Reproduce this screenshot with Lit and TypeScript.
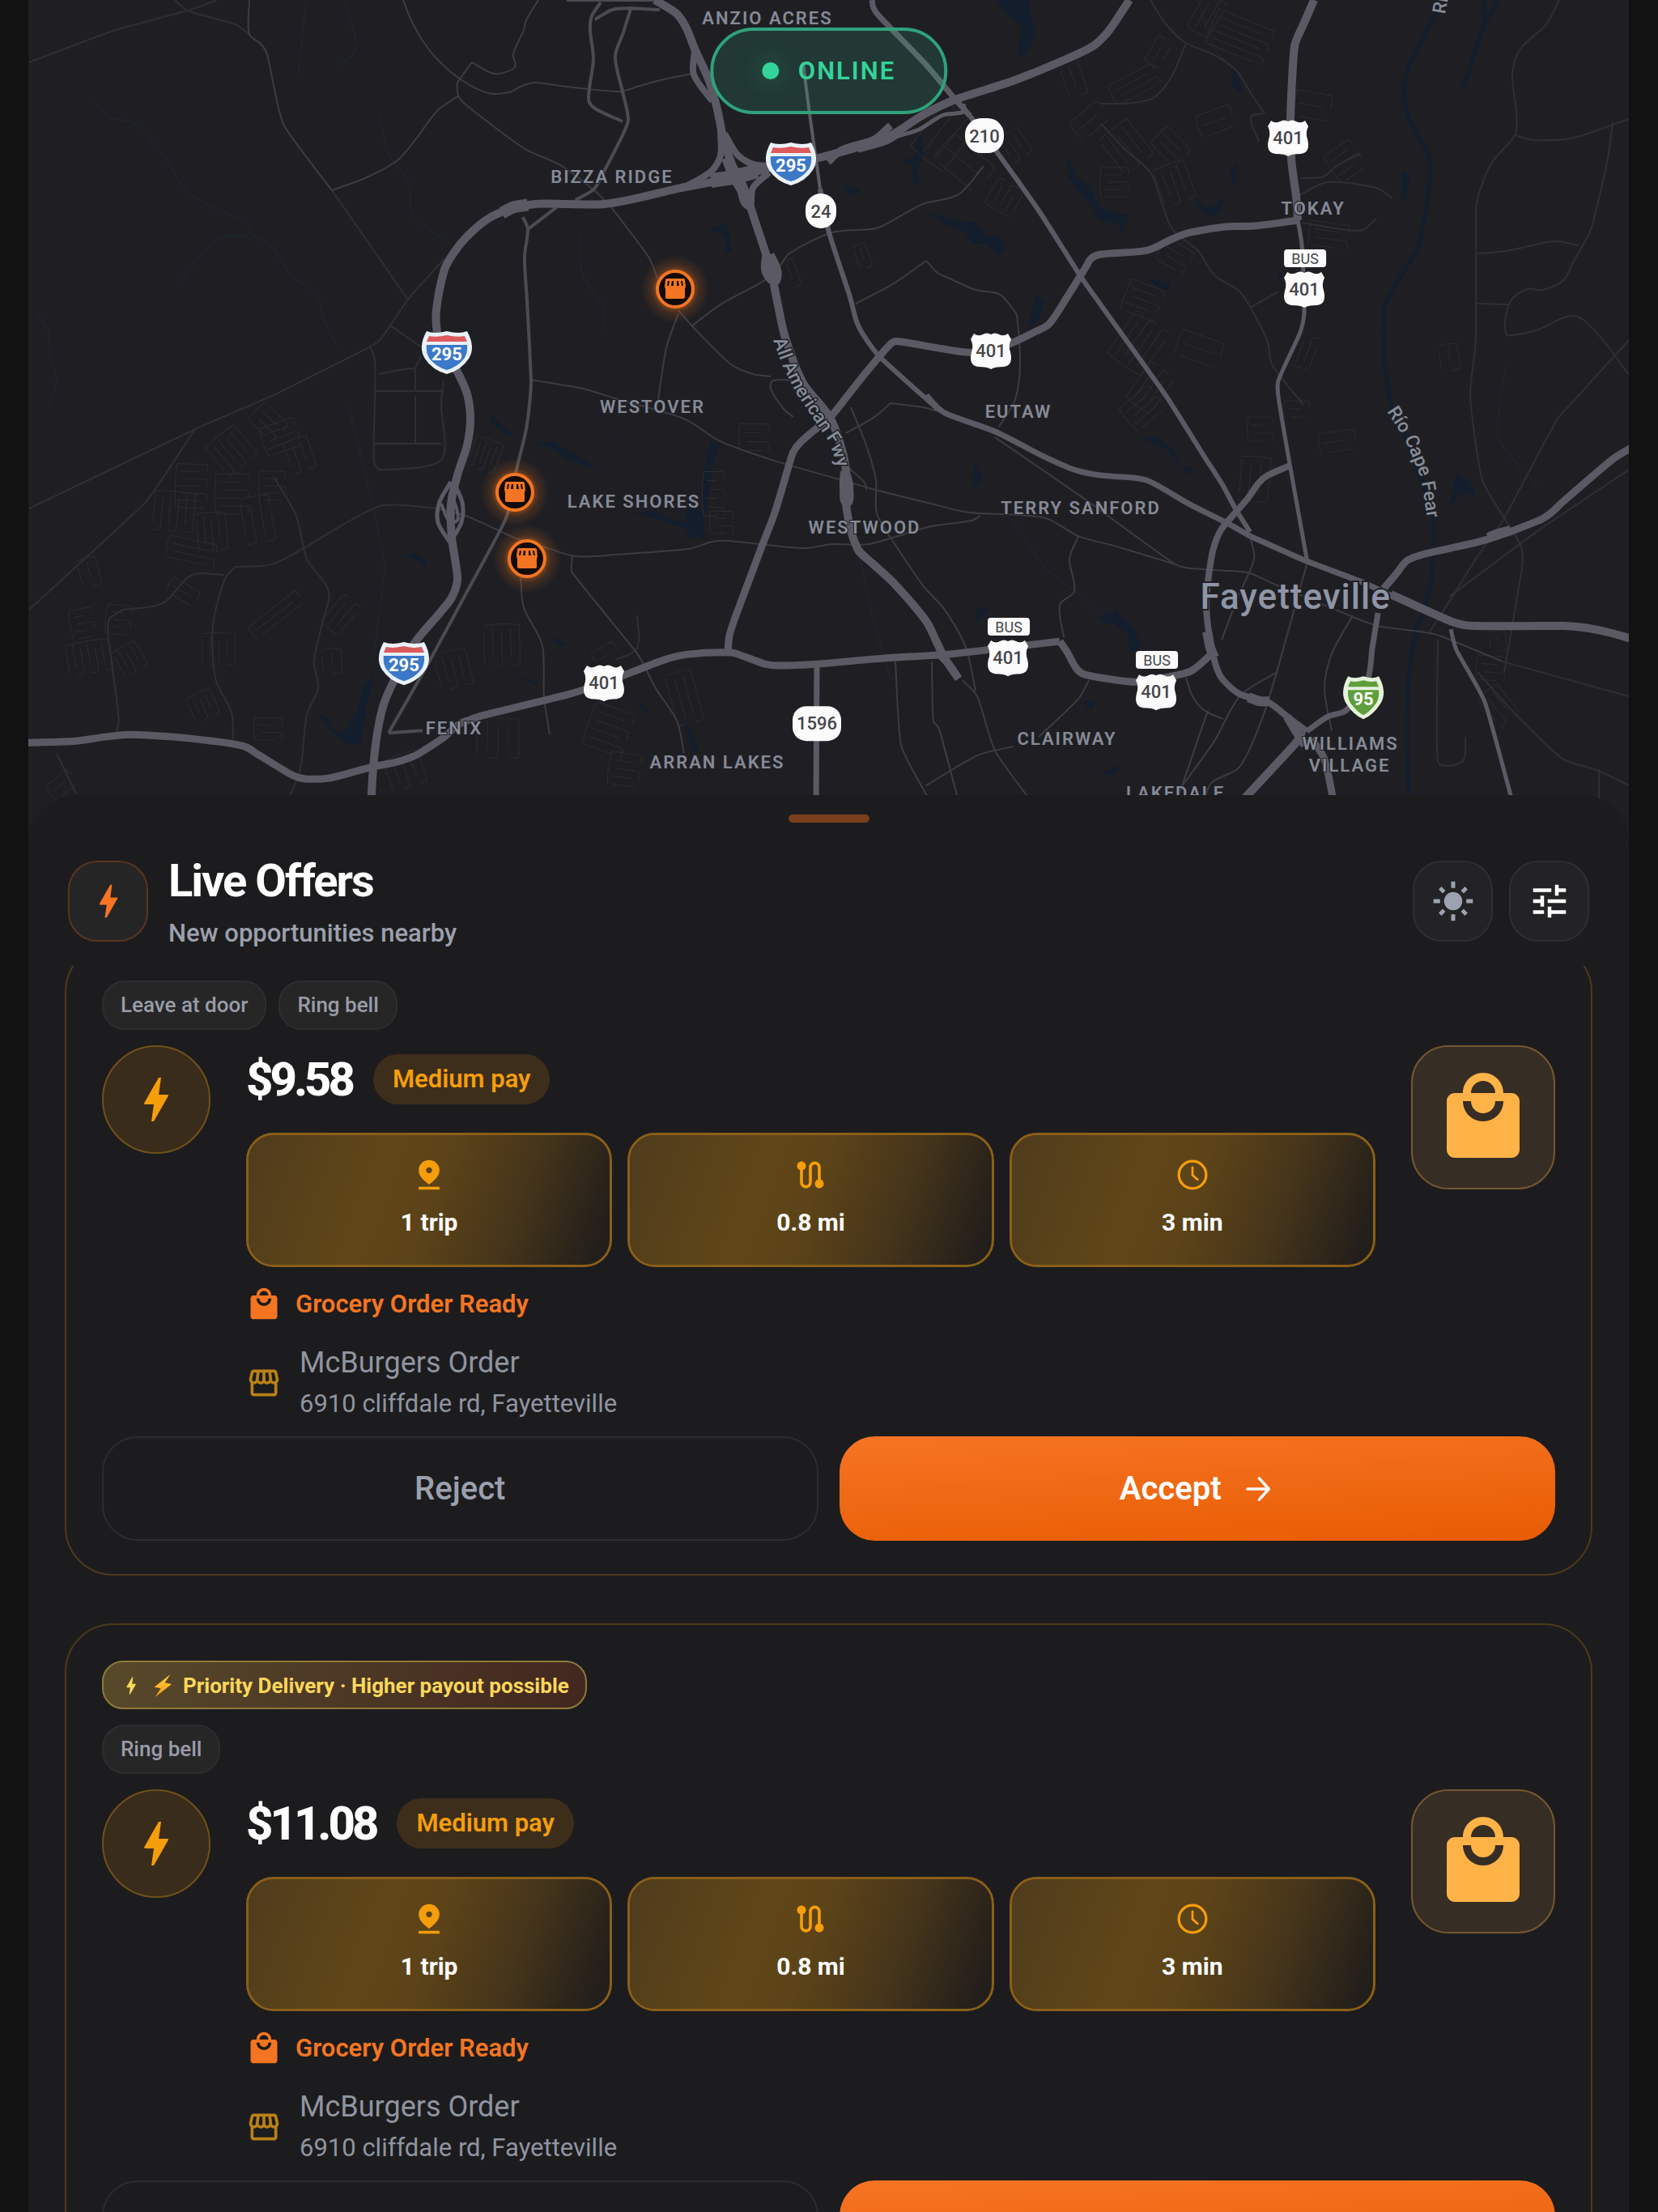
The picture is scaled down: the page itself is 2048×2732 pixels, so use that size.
import { LitElement, html, css, svg, nothing } from "lit";
import { customElement, property } from "lit/decorators.js";

type Point = [number, number];

const ICONS = {
  bolt: svg`<path d="M11 21h-1l1-7H7.5c-.6 0-.55-.35-.38-.66C8.5 10.9 10.4 7.5 13 3h1l-1 7h3.5c.5 0 .56.33.47.51C12.96 17.55 11 21 11 21z" />`,
  bag: svg`<path d="M19 6h-2c0-2.76-2.24-5-5-5S7 3.24 7 6H5c-1.1 0-1.99.9-1.99 2L3 20c0 1.1.9 2 2 2h14c1.1 0 2-.9 2-2V8c0-1.1-.9-2-2-2zm-7-3c1.66 0 3 1.34 3 3H9c0-1.66 1.34-3 3-3zm0 10c-2.76 0-5-2.24-5-5h2c0 1.66 1.34 3 3 3s3-1.34 3-3h2c0 2.76-2.24 5-5 5z" />`,
  store: svg`<path d="M21.9 8.89l-1.05-4.37c-.22-.9-1-1.52-1.91-1.52H5.05c-.9 0-1.69.63-1.9 1.52L2.1 8.89c-.24 1.02-.02 2.06.62 2.88.08.11.19.19.28.29V19c0 1.1.9 2 2 2h14c1.1 0 2-.9 2-2v-6.94c.09-.09.2-.18.28-.28.64-.82.87-1.87.62-2.89zm-2.99-3.9l1.05 4.37c.1.42.01.84-.25 1.17-.14.18-.44.47-.94.47-.61 0-1.14-.49-1.21-1.14L16.98 5l1.93-.01zM13 5h1.96l.54 4.52c.05.39-.07.78-.33 1.07-.22.26-.54.41-.95.41-.67 0-1.22-.59-1.22-1.31V5zM8.49 9.52L9.04 5H11v4.69c0 .72-.55 1.31-1.29 1.31-.34 0-.65-.15-.89-.41-.25-.29-.37-.68-.33-1.07zm-4.45-.16L5.05 5h1.97l-.58 4.86c-.08.65-.6 1.14-1.21 1.14-.49 0-.8-.29-.93-.47-.27-.32-.36-.75-.26-1.17zM5 19v-6.03c.08.01.15.03.23.03.87 0 1.66-.36 2.24-.95.6.6 1.4.95 2.31.95.87 0 1.65-.36 2.23-.93.59.57 1.39.93 2.29.93.84 0 1.64-.35 2.24-.95.58.59 1.37.95 2.24.95.08 0 .15-.02.23-.03V19H5z" />`,
  pin: svg`<path fill-rule="evenodd" d="M12 2a7 7 0 0 0-7 7c0 4 3.6 7 7 9.600C15.400 16 19 13 19 9a7 7 0 0 0-7-7zm0 8.900a2 2 0 1 1 0-4 2 2 0 0 1 0 4zM5 20v2h14v-2z" />`,
  route: svg`<path d="M19 15.180V7c0-2.210-1.790-4-4-4s-4 1.790-4 4v10c0 1.100-.9 2-2 2s-2-.9-2-2V8.820C8.160 8.400 9 7.300 9 6c0-1.660-1.340-3-3-3S3 4.340 3 6c0 1.300.840 2.400 2 2.820V17c0 2.210 1.790 4 4 4s4-1.790 4-4V7c0-1.100.9-2 2-2s2 .9 2 2v8.180c-1.160.41-2 1.510-2 2.820 0 1.660 1.340 3 3 3s3-1.340 3-3c0-1.300-.84-2.400-2-2.820z" />`,
  clock: svg`<g fill="none" stroke="currentColor" stroke-linecap="round"><circle cx="12" cy="12" r="9.200" stroke-width="1.800" /><path d="M12 7v5.200l3.400 3" stroke-width="1.500" /></g>`,
  arrow: svg`<path d="M4.500 12h14.500M12.800 4.500L19.600 12l-6.800 7.500" fill="none" stroke="currentColor" stroke-width="2" stroke-linecap="round" stroke-linejoin="round" />`,
  tune: svg`<path d="M3 17v2h6v-2H3zM3 5v2h10V5H3zm10 16v-2h8v-2h-8v-2h-2v6h2zM7 9v2H3v2h4v2h2V9H7zm14 4v-2H11v2h10zm-6-4h2V7h4V5h-4V3h-2v6z" />`,
  sun: svg`<circle cx="12" cy="12" r="5" /><path fill="none" stroke="currentColor" stroke-width="2.200" d="M12 1.200v3.600M12 19.200v3.600M1.200 12h3.600M19.200 12h3.600M4.800 4.800l2.200 2.200M17 17l2.200 2.200M4.800 19.200l2.200-2.200M17 7l2.200-2.200" />`,
  emojiBolt: svg`<defs><linearGradient id="zap" x1="0" y1="0" x2="0" y2="1"><stop offset="0" stop-color="#ffd23f" /><stop offset="1" stop-color="#fb9a13" /></linearGradient></defs><path fill="url(#zap)" d="M20 0L3 13.500l7 1.200L4 24 21.500 10.200l-7.200-1.400z" />`,
};

const icon = (name: keyof typeof ICONS, cls: string) =>
  html`<svg class="icon ${cls}" viewBox="0 0 24 24" fill="currentColor" aria-hidden="true">${ICONS[name]}</svg>`;

/* ---------- map data, in map units ---------- */

const MAJOR: { w: number; d: string }[] = [
  { w: 10, d: "459,1040 459,982 464,920 473,873 487,840 513,793 545,755 558,738 565,717 562,690 558,663 557,623 565,587 577,550 581,520 578,490 567,463 545,425 540,410 539,383 549,333 560,313 576,293 600,272 625,260 661,252 700,252 747,252 790,244 836,233 903,220 948,208 1019,193 1095,170 1140,142 1180,123 1251,100 1310,76 1350,57 1368,40 1382,20 1395,0" },
  { w: 10, d: "809,0 836,17 848,35 858,60 876,100 886,135 894,173 905,205 917,227 934,277 952,333 960,372 970,417 992,473 1026,517 1044,573 1046,630 1059,677 1078,696 1104,720 1144,767 1158,795 1167,813 1184,838" },
  { w: 8, d: "858,62 857,92 880,125" },
  { w: 8, d: "890,160 890,192 878,212 840,234" },
  { w: 8, d: "895,165 912,192 935,204 985,203" },
  { w: 18, d: "878,223 905,219 935,211" },
  { w: 12, d: "897,195 905,215 918,238" },
  { w: 8, d: "912,225 924,255 930,232 950,213" },
  { w: 5, d: "1060,186 1095,176 1110,168 1135,160 1165,142 1190,138 1190,128" },
  { w: 9, d: "1023,200 1040,185 1080,172 1100,155" },
  { w: 9, d: "946,312 945,335 957,348 961,335 952,314" },
  { w: 8, d: "1042,582 1041,600 1046,622 1050,600 1045,580" },
  { w: 9, d: "1052,660 1060,680 1070,690" },
  { w: 9, d: "1162,810 1175,824 1184,838" },
  { w: 5, d: "557,595 543,620 541,645 556,670" },
  { w: 5, d: "560,595 571,620 570,645 556,670" },
  { w: 4, d: "545,622 556,645 566,640 558,610" },
  { w: 15, d: "620,263 634,256 652,253" },
  { w: 4, d: "992,77 999,133 1013,233" },
  { w: 6, d: "1013,233 1024,287 1050,367 1058,397 1066,413 1086,440 1158,505" },
  { w: 7, d: "1144,488 1160,505 1171,512 1229,533 1290,564 1327,580 1360,587 1400,590 1421,595 1470,623 1514,645 1544,662" },
  { w: 7, d: "1544,662 1614,693 1680,718 1724,738" },
  { w: 10, d: "1718,734 1794,768 1821,773 1930,773 1974,778 2020,790" },
  { w: 7, d: "1077,0 1079,10 1086,20 1144,80 1175,117 1198,143" },
  { w: 6, d: "1198,143 1233,190 1283,260 1334,340 1360,377 1441,490 1487,563 1509,597 1527,630 1544,657" },
  { w: 10, d: "1623,0 1610,30 1599,57 1594,143 1595,197 1601,243 1603,272" },
  { w: 9, d: "1603,272 1549,279 1514,280 1470,287 1450,294 1417,309 1360,314 1348,319 1341,330 1318,367 1296,400 1280,409 1251,423 1225,433 1193,435 1113,422 1104,422 1095,430 1064,467 1042,495 1024,517 1005,532 988,547 980,558 975,573 957,633 939,680 908,763 901,785 899,805" },
  { w: 5, d: "1603,272 1608,303 1611,383 1606,410 1579,470 1579,490 1593,573 1614,690" },
  { w: 8, d: "1593,575 1566,587 1555,596 1540,617 1509,653 1501,670 1496,690 1490,740 1492,773 1498,807 1504,828 1511,840 1531,857 1566,867 1590,885 1614,903" },
  { w: 12, d: "1491,780 1495,800 1500,812" },
  { w: 12, d: "1542,861 1556,866 1568,866" },
  { w: 10, d: "1524,1000 1601,917 1608,904" },
  { w: 11, d: "1590,885 1602,905 1612,920" },
  { w: 7, d: "1614,903 1640,885 1663,877 1689,840 1695,800 1702,757" },
  { w: 9, d: "1620,912 1636,938 1649,1000" },
  { w: 9, d: "1709,727 1725,708 1737,693 1750,687 1764,683 1834,667 1900,643 1915,634 1930,620 1992,567 2020,550" },
  { w: 12, d: "1838,664 1850,659 1866,655" },
  { w: 5, d: "1792,777 1795,790 1799,803 1834,867 1868,990" },
  { w: 9, d: "35,917 94,915 130,910 161,907 214,910 270,916 295,920 305,923 321,933 357,955 368,960 379,962 406,961 460,947 490,941 513,933 525,926 549,910 566,895 580,889 598,883 700,858 747,843 820,815 850,808 903,806 920,811 945,820 961,822 1010,820 1090,813 1171,808 1240,800 1309,792" },
  { w: 9, d: "1309,792 1318,805 1330,826 1340,833 1380,840 1404,842 1457,833 1474,827 1496,808" },
  { w: 7, d: "1009,823 1008,1000" },
];

const MEDIUM: string[] = [
  "646,268 652,283 648,317 651,370 656,467 655,490 650,530 638,580 625,640 580,725 527,823 480,905",
  "480,905 522,902",
  "652,283 690,254",
  "700,0 815,0",
  "742,3 731,20 729,37 733,73 727,123 735,134 769,150",
  "780,8 770,40 760,70 769,113 776,147 770,165 747,210 734,233 711,247",
  "735,24 760,11 815,12",
];

const MINOR: string[] = [
  "308,0 308,42 322,54 330,67 350,153 410,235",
  "498,0 508,25 522,50 540,73 569,98 603,115 629,114 645,106 661,102 700,107 765,113 790,106 820,98 855,91",
  "665,0 650,25 647,37 634,67 636,83 616,91 604,89 583,77",
  "583,77 570,95 565,103 567,120 580,133 647,183 680,198 694,205 734,235 756,257",
  "567,118 540,137 515,170 491,198 451,220 410,235",
  "756,257 801,317 812,343",
  "838,383 859,407 903,450 930,462 952,465",
  "838,387 823,430 812,500",
  "854,403 890,376 943,347 962,330 975,313 1028,287 1082,282 1110,268 1140,252 1184,240 1215,205",
  "1057,375 1104,350 1144,322",
  "1144,322 1158,337 1171,343 1205,358 1234,363 1250,380 1256,390 1260,450 1254,493 1234,527",
  "656,469 680,473 720,480 760,492 845,517 890,545 960,570 1037,592 1082,605 1150,622 1198,633 1240,635",
  "540,628 576,637 638,665 680,678 711,687 760,685 850,678 880,669 900,668 992,677 1028,672 1073,672 1150,650 1200,643 1211,637",
  "1229,540 1341,617 1452,697 1483,703 1540,707 1571,720 1650,753 1702,773 1772,783 1856,817",
  "1240,635 1292,640 1332,662 1380,675 1452,697",
  "1332,662 1321,690 1327,730 1309,747 1314,787",
  "1051,503 1070,550 1082,593 1084,637 1140,723 1167,753 1193,800 1205,853",
  "1189,840 1207,860 1229,927 1274,990",
  "1251,922 1207,933 1144,970",
  "1106,817 1113,920 1149,990",
  "1151,817 1153,890 1160,900 1184,990",
  "1345,840 1332,863 1283,910",
  "1465,837 1472,858 1487,877 1511,888",
  "1492,877 1456,982",
  "1577,830 1531,860 1500,915 1457,975",
  "1614,697 1579,823 1558,890 1531,947 1496,967 1487,990",
  "1544,663 1549,690 1530,735 1509,790",
  "1671,760 1645,807 1636,850 1645,903",
  "643,713 647,750 670,797 672,860 679,907",
  "707,687 707,707 787,807 810,850 836,890 845,930",
  "984,470 955,470 952,480 968,505 980,515",
  "1045,535 1080,515 1100,498",
  "1045,575 1068,596 1070,605",
  "1100,498 1140,503 1171,512",
];

const FAINT: string[] = [
  "410,235 504,370",
  "549,320 535,335 504,370 482,402 467,422 440,437 388,463 340,487 241,530 36,628",
  "241,530 180,620 36,753",
  "482,402 520,428",
  "36,77 140,38 232,13 268,0",
  "216,0 232,13 290,30 308,42",
  "290,700 335,697 375,677 420,650 469,625 500,624 540,628",
  "290,700 277,717 263,773 266,837 286,880 288,913",
  "339,590 366,637 379,690 406,730 398,770 388,817 393,850 379,883 371,950 355,990",
  "152,753 201,745 237,710 277,710",
  "152,753 134,767 138,817 147,890 143,905",
  "1926,0 1910,30 1878,60 1868,90 1873,140 1871,167 1843,200 1828,235 1823,260 1823,417 1816,490 1830,590 1856,637 1880,680 1875,730 1858,830",
  "1871,167 1895,173 1944,170 2012,147",
  "1992,150 1985,200 1965,283 1945,320 1930,347 1905,358 1886,357 1865,373 1860,412 1875,413 1900,407 1944,390 1974,413 2012,463",
  "1825,313 1860,310 1920,298 1950,303",
  "1823,375 1865,376",
  "2012,420 1939,500 1922,520 1856,643 1825,687 1790,743 1764,783",
  "2012,580 1900,655 1790,737",
  "1421,0 1440,30 1465,53 1500,68 1527,87 1545,115 1562,140",
  "1465,53 1448,93 1426,120 1400,127 1360,128",
  "1360,153 1390,185 1421,213 1435,250 1448,283 1480,310 1500,340 1531,360 1553,395 1566,423 1571,450 1610,500",
  "1544,380 1579,360",
  "1856,817 2012,860",
  "1825,830 1870,880 1930,937 1970,950 2012,970",
  "1975,950 1975,1000",
  "1776,790 1776,940 1806,940 1810,910",
  "457,427 463,445 463,500 462,570 470,580 545,568 545,500 548,470",
  "468,462 505,455 512,455 520,440",
  "463,548 545,548",
  "465,483 548,483",
  "513,490 513,547",
  "513,455 513,483",
  "94,980 70,930",
  "787,760 787,800 760,815",
  "1560,140 1545,145 1555,175",
  "1607,220 1635,218 1650,205 1680,190",
  "1601,243 1640,225 1700,232 1720,245",
  "1608,275 1680,285 1700,270",
];

const STREAMS: string[] = [
  "115,125 135,145 165,152 200,190 230,235 260,255 305,275 312,290 335,303 360,340 392,365 400,395 418,430",
  "305,290 270,295 240,325 218,355",
  "45,385 60,410 62,440 70,470 60,500",
  "468,140 480,190 505,225 510,265 550,298",
  "378,0 372,60 368,95",
  "425,0 440,60 418,82",
  "430,500 455,600 475,700 460,820",
  "715,290 720,340 745,380 745,410",
  "1060,680 1080,770 1100,840",
  "1250,640 1290,700 1340,740 1370,770",
  "1480,0 1500,60 1530,90",
  "1860,450 1850,540 1900,600",
];

const WATER: string[] = [
  "1230,0 1270,0 1275,25 1280,40 1268,66 1256,70 1262,35 1240,12",
  "1148,262 1175,270 1205,275 1220,290 1236,292 1242,308 1232,316 1218,302 1202,302 1190,285 1165,276",
  "1318,195 1330,218 1345,230 1362,262 1380,265 1380,275 1358,272 1340,245 1320,220",
  "1136,165 1142,190 1132,210 1136,228 1126,225 1128,205 1115,200 1130,192",
  "1280,365 1290,372 1284,395 1270,405 1275,385",
  "893,275 900,283 904,310 897,312 894,290 875,282 888,280",
  "1040,230 1064,234 1056,243 1044,236",
  "1360,257 1385,264 1394,266 1386,288 1380,276 1360,274",
  "1474,243 1490,258 1500,255 1514,242 1508,258 1496,270 1484,262",
  "1522,82 1532,100 1534,116 1522,106",
  "1530,200 1526,218 1530,230 1522,226 1520,210",
  "1418,342 1445,350 1445,360 1428,354",
  "1733,212 1742,215 1738,240 1734,250 1730,225",
  "464,830 456,860 450,890 446,918 430,920 412,905 393,882 402,884 415,903 425,905 440,880 448,850",
  "783,633 810,630 825,640 845,645 852,625 868,632 870,665 856,665 845,652 800,638",
  "872,570 878,545 890,548 880,575 874,625 868,640 868,600",
  "680,545 700,555 725,570 738,580 722,575 700,568 690,560",
  "745,515 762,535 767,545 758,530",
  "605,512 632,535 630,540 610,525",
  "660,547 685,545 700,560 685,555",
  "500,688 512,682 526,692 527,702 515,692",
  "1410,541 1430,540 1450,555 1460,575 1474,578 1470,588 1455,570 1440,555",
  "1800,583 1820,600 1822,612 1805,610 1790,625 1795,600",
  "1203,570 1214,590 1207,600 1200,600",
  "1360,765 1380,756 1400,775 1410,800 1396,805 1392,782 1375,770",
  "1207,750 1222,752 1205,770",
  "680,785 690,790 702,796 690,797",
  "843,885 856,905 865,930 855,928 850,905",
  "782,862 805,880 800,882",
  "1358,762 1380,752 1380,766 1365,770",
  "1337,866 1352,866 1350,875 1342,873",
  "1355,955 1385,945 1375,958",
  "1580,336 1586,338 1580,346",
  "640,835 664,843 660,846",
];

/* Residential streets: short parallel runs with one collector. */
interface Block { x: number; y: number; n: number; gap: number; len: number; rot: number }
const BLOCKS: Block[] = [
  { x: 345, y: 540, n: 5, gap: 9, len: 40, rot: -20 },
  { x: 285, y: 555, n: 6, gap: 9, len: 42, rot: 50 },
  { x: 235, y: 600, n: 7, gap: 9, len: 34, rot: 2 },
  { x: 285, y: 610, n: 6, gap: 10, len: 36, rot: 0 },
  { x: 335, y: 600, n: 5, gap: 9, len: 28, rot: 0 },
  { x: 215, y: 630, n: 6, gap: 10, len: 44, rot: 95 },
  { x: 262, y: 655, n: 5, gap: 9, len: 42, rot: 85 },
  { x: 318, y: 640, n: 4, gap: 12, len: 52, rot: 80 },
  { x: 330, y: 520, n: 4, gap: 10, len: 36, rot: 45 },
  { x: 370, y: 560, n: 4, gap: 10, len: 36, rot: 70 },
  { x: 235, y: 680, n: 4, gap: 9, len: 56, rot: 12 },
  { x: 100, y: 770, n: 5, gap: 9, len: 24, rot: -10 },
  { x: 145, y: 765, n: 5, gap: 9, len: 26, rot: 5 },
  { x: 110, y: 810, n: 7, gap: 9, len: 34, rot: 80 },
  { x: 160, y: 812, n: 5, gap: 8, len: 30, rot: 60 },
  { x: 270, y: 800, n: 5, gap: 10, len: 34, rot: 90 },
  { x: 225, y: 730, n: 3, gap: 10, len: 34, rot: 30 },
  { x: 340, y: 760, n: 3, gap: 9, len: 70, rot: -38 },
  { x: 420, y: 760, n: 4, gap: 9, len: 40, rot: -50 },
  { x: 410, y: 815, n: 3, gap: 12, len: 26, rot: 85 },
  { x: 250, y: 870, n: 5, gap: 8, len: 28, rot: 65 },
  { x: 330, y: 900, n: 4, gap: 9, len: 30, rot: 0 },
  { x: 110, y: 705, n: 3, gap: 12, len: 30, rot: 75 },
  { x: 600, y: 560, n: 6, gap: 7, len: 34, rot: 110 },
  { x: 560, y: 825, n: 5, gap: 10, len: 40, rot: 75 },
  { x: 620, y: 795, n: 5, gap: 11, len: 46, rot: 88 },
  { x: 500, y: 950, n: 5, gap: 11, len: 36, rot: 70 },
  { x: 615, y: 910, n: 5, gap: 13, len: 44, rot: 90 },
  { x: 880, y: 610, n: 6, gap: 11, len: 22, rot: 0 },
  { x: 890, y: 645, n: 4, gap: 9, len: 24, rot: 0 },
  { x: 930, y: 540, n: 4, gap: 11, len: 32, rot: 0 },
  { x: 750, y: 900, n: 6, gap: 11, len: 46, rot: 20 },
  { x: 770, y: 950, n: 5, gap: 10, len: 34, rot: 8 },
  { x: 845, y: 860, n: 4, gap: 11, len: 60, rot: 75 },
  { x: 745, y: 805, n: 2, gap: 12, len: 26, rot: -30 },
  { x: 1165, y: 170, n: 4, gap: 17, len: 66, rot: -52 },
  { x: 1190, y: 200, n: 3, gap: 20, len: 62, rot: 40 },
  { x: 1250, y: 180, n: 5, gap: 9, len: 30, rot: 55 },
  { x: 1240, y: 245, n: 5, gap: 9, len: 32, rot: -60 },
  { x: 1325, y: 95, n: 3, gap: 12, len: 40, rot: 70 },
  { x: 1345, y: 150, n: 3, gap: 14, len: 40, rot: -40 },
  { x: 1065, y: 315, n: 3, gap: 8, len: 26, rot: 70 },
  { x: 980, y: 335, n: 2, gap: 9, len: 30, rot: 70 },
  { x: 1530, y: 45, n: 6, gap: 9, len: 70, rot: 22 },
  { x: 1490, y: 20, n: 4, gap: 10, len: 44, rot: -60 },
  { x: 1400, y: 105, n: 4, gap: 9, len: 56, rot: -28 },
  { x: 1430, y: 65, n: 3, gap: 10, len: 30, rot: -60 },
  { x: 1390, y: 180, n: 5, gap: 11, len: 50, rot: 52 },
  { x: 1375, y: 225, n: 5, gap: 9, len: 30, rot: 0 },
  { x: 1445, y: 180, n: 4, gap: 10, len: 38, rot: 45 },
  { x: 1450, y: 225, n: 5, gap: 10, len: 44, rot: 70 },
  { x: 1500, y: 150, n: 3, gap: 14, len: 40, rot: -20 },
  { x: 1450, y: 315, n: 4, gap: 10, len: 34, rot: 30 },
  { x: 1410, y: 370, n: 5, gap: 10, len: 40, rot: 20 },
  { x: 1405, y: 425, n: 6, gap: 10, len: 60, rot: -55 },
  { x: 1480, y: 430, n: 3, gap: 16, len: 50, rot: 20 },
  { x: 1420, y: 480, n: 5, gap: 9, len: 50, rot: -55 },
  { x: 1610, y: 435, n: 4, gap: 9, len: 36, rot: -70 },
  { x: 1660, y: 200, n: 5, gap: 10, len: 34, rot: -35 },
  { x: 1640, y: 290, n: 4, gap: 10, len: 44, rot: 8 },
  { x: 1620, y: 130, n: 3, gap: 16, len: 40, rot: 10 },
  { x: 1410, y: 505, n: 5, gap: 9, len: 42, rot: -40 },
  { x: 1555, y: 530, n: 4, gap: 10, len: 26, rot: 0 },
  { x: 1650, y: 545, n: 3, gap: 12, len: 40, rot: -8 },
  { x: 1550, y: 590, n: 4, gap: 12, len: 50, rot: 95 },
  { x: 1600, y: 505, n: 3, gap: 10, len: 26, rot: 0 },
  { x: 1840, y: 825, n: 4, gap: 10, len: 30, rot: 5 },
  { x: 1850, y: 870, n: 4, gap: 10, len: 40, rot: 50 },
  { x: 1850, y: 790, n: 3, gap: 10, len: 20, rot: 85 },
  { x: 1790, y: 440, n: 3, gap: 12, len: 28, rot: 80 },
  { x: 75, y: 970, n: 3, gap: 11, len: 30, rot: -40 },
];

const blockPath = (b: Block) => {
  let d = "";
  const half = ((b.n - 1) * b.gap) / 2;
  for (let i = 0; i < b.n; i++) {
    const y = i * b.gap - half;
    const left = -b.len / 2 + ((i * 7) % 5) * 2;
    const right = b.len / 2 - ((i * 3) % 6) * 2;
    d += `M${left} ${y}H${right}`;
    if (i % 2 === 0 && i < b.n - 1) d += `q4 0 4 4v${b.gap - 4}`;
  }
  return `${d}M${-b.len / 2} ${-half}q-3 ${half} 0 ${half * 2}`;
};

const toPoints = (s: string): Point[] => s.split(" ").map((p) => p.split(",").map(Number) as Point);

/* Smooth curve through every point, with handles scaled to each segment. */
const curve = (s: string) => {
  const p = toPoints(s);
  const dir = (i: number): Point => {
    const a = p[Math.max(i - 1, 0)];
    const b = p[Math.min(i + 1, p.length - 1)];
    const n = Math.hypot(b[0] - a[0], b[1] - a[1]) || 1;
    return [(b[0] - a[0]) / n, (b[1] - a[1]) / n];
  };
  let d = `M${p[0][0]} ${p[0][1]}`;
  for (let i = 0; i < p.length - 1; i++) {
    const [a, b, u, v] = [p[i], p[i + 1], dir(i), dir(i + 1)];
    const h = Math.min(Math.hypot(b[0] - a[0], b[1] - a[1]) * 0.3, 16);
    d += `C${a[0] + u[0] * h} ${a[1] + u[1] * h} ${b[0] - v[0] * h} ${b[1] - v[1] * h} ${b[0]} ${b[1]}`;
  }
  return d;
};

const PLACES: { t: string; x: number; y: number }[] = [
  { t: "ANZIO ACRES", x: 948, y: 30 },
  { t: "BIZZA RIDGE", x: 756, y: 226 },
  { t: "TOKAY", x: 1622, y: 265 },
  { t: "WESTOVER", x: 806, y: 510 },
  { t: "EUTAW", x: 1258, y: 516 },
  { t: "LAKE SHORES", x: 783, y: 627 },
  { t: "WESTWOOD", x: 1068, y: 659 },
  { t: "TERRY SANFORD", x: 1335, y: 635 },
  { t: "FENIX", x: 561, y: 907 },
  { t: "ARRAN LAKES", x: 886, y: 949 },
  { t: "CLAIRWAY", x: 1318, y: 920 },
  { t: "WILLIAMS", x: 1668, y: 926 },
  { t: "VILLAGE", x: 1667, y: 953 },
  { t: "LAKEDALE", x: 1452, y: 987 },
];

const US_ROUTES: Point[] = [[1591, 170], [1611, 357], [1224, 433], [746, 843], [1245, 812], [1428, 854]];
const BUSINESS: Point[] = [[1612, 319], [1246, 774], [1429, 815]];
const INTERSTATES: Point[] = [[552, 435], [977, 202], [499, 819]];
const PICKUPS: Point[] = [[834, 357], [636, 608], [651, 690]];

@customElement("city-map")
export class CityMap extends LitElement {
  static styles = css`
    :host { display: block; overflow: hidden; background: #1f1f23; }
    .canvas { display: block; width: 100%; height: 100%; }
    text { font-family: Roboto, "Liberation Sans", sans-serif; }
    .road, .medium, .minor, .faint, .stream, .river, .streets { fill: none; stroke-linejoin: round; }
    .road { stroke: #5b5a64; }
    .medium { stroke: #4c4b52; stroke-width: 4; }
    .minor { stroke: #3d3c41; stroke-width: 2; }
    .faint { stroke: #303034; stroke-width: 2; }
    .streets { stroke: #2d2d31; stroke-width: 1; }
    .stream { stroke: #1d252b; stroke-width: 2; }
    .river { stroke: #131d2b; stroke-width: 5; }
    .water { fill: #131d2b; }
    .place { fill: #868a97; font-size: 22px; font-weight: 600; letter-spacing: 2px; text-anchor: middle; stroke: #1f1f23; stroke-width: 2; paint-order: stroke; }
    .city { fill: #8f95a6; font-size: 44px; font-weight: 500; letter-spacing: 1px; text-anchor: middle; stroke: #1f1f23; stroke-width: 4; paint-order: stroke; }
    .way { fill: #868c9a; font-size: 23px; font-weight: 500; stroke: #1f1f23; stroke-width: 3; paint-order: stroke; }
    .num { font-size: 22px; font-weight: 500; text-anchor: middle; fill: #45464a; }
    .bus { font-size: 18px; font-weight: 400; }
    .light { fill: #ffffff; font-weight: 700; }
    .plate { fill: #fbfbfb; }
  `;

  render() {
    return html`
      <svg class="canvas" viewBox="35 0 1977 1038" preserveAspectRatio="xMidYMin slice" role="img" aria-label="Map of Fayetteville">
        <defs>
          <radialGradient id="glow">
            <stop offset="0.5" stop-color="#f97316" stop-opacity="0.5" />
            <stop offset="0.7" stop-color="#f97316" stop-opacity="0.16" />
            <stop offset="1" stop-color="#f97316" stop-opacity="0" />
          </radialGradient>
          <path id="fwy" d="M955 420L966 450L982 483L1004 516L1024 545L1034 575L1038 600" />
          <path id="cape" d="M1713 508L1736 544L1755 590L1763 640L1764 660" />
        </defs>
        ${STREAMS.map((p) => svg`<path class="stream" d=${curve(p)} />`)}
        ${WATER.map((p) => svg`<polygon class="water" points=${p} />`)}
        <path class="river" d="M1778 10L1742 77Q1726 115 1742 150L1766 193Q1770 230 1751 307L1711 373Q1703 420 1718 500L1740 550L1770 633Q1776 720 1751 773Q1730 850 1742 1000" />
        <path class="river" d="M1851 0L1834 27L1808 107M1832 0L1834 27" />
        ${BLOCKS.map((b) => svg`<path class="streets" transform="translate(${b.x} ${b.y}) rotate(${b.rot})" d=${blockPath(b)} />`)}
        ${FAINT.map((p) => svg`<path class="faint" d=${curve(p)} />`)}
        ${MINOR.map((p) => svg`<path class="minor" d=${curve(p)} />`)}
        ${MEDIUM.map((p) => svg`<path class="medium" d=${curve(p)} />`)}
        ${MAJOR.map((r) => svg`<path class="road" stroke-width=${r.w} d=${curve(r.d)} />`)}
        ${PLACES.map((p) => svg`<text class="place" x=${p.x} y=${p.y}>${p.t}</text>`)}
        <text class="city" x="1600" y="752">Fayetteville</text>
        <text class="way"><textPath href="#fwy">All American Fwy</textPath></text>
        <text class="way"><textPath href="#cape">Río Cape Fear</textPath></text>
        <text class="way" transform="translate(1785 18) rotate(-80)">Río</text>
        ${INTERSTATES.map(([x, y]) => this.interstate(x, y, "295", "#3b78c8", "#dd5a5c", "#e9f1fb", 30))}
        ${this.interstate(1684, 861, "95", "#5f9e3c", "#5f9e3c", "#e4f1db", 24)}
        <rect class="plate" x="1192" y="146" width="48" height="43" rx="20" />
        <text class="num" x="1216" y="176">210</text>
        <rect class="plate" x="995" y="239" width="38" height="43" rx="19" />
        <text class="num" x="1014" y="269">24</text>
        <rect class="plate" x="979" y="872" width="60" height="43" rx="17" />
        <text class="num" x="1009" y="901">1596</text>
        ${US_ROUTES.map(([x, y]) => svg`
          <g transform="translate(${x} ${y})">
            <path class="plate" d="M-21 -21Q-16 -17 -10 -20Q-5 -23 0 -20Q5 -23 10 -20Q16 -17 21 -21L25 -14Q21 -6 24 2Q28 18 16 20Q4 20 0 23Q-4 20 -16 20Q-28 18 -24 2Q-21 -6 -25 -14Z" />
            <text class="num" x="0" y="8">401</text>
          </g>`)}
        ${BUSINESS.map(([x, y]) => svg`
          <g transform="translate(${x} ${y})">
            <rect class="plate" x="-26" y="-11" width="52" height="22" rx="4" />
            <text class="num bus" x="0" y="7">BUS</text>
          </g>`)}
        ${PICKUPS.map(([x, y]) => svg`
          <g transform="translate(${x} ${y})">
            <circle r="42" fill="url(#glow)" />
            <circle r="22" fill="#120b06" stroke="#f47521" stroke-width="4" />
            <path fill="#f47521" fill-rule="evenodd" d="M-10 -13H10Q12 -13 12 -11L13 -3L12 0V10Q12 12 10 12H-10Q-12 12 -12 10V0L-13 -3L-12 -11Q-12 -13 -10 -13ZM-9 -10L-10 -4H-8L-7 -10ZM-4 -10L-5 -4H-2V-10ZM2 -10V-4H5L4 -10ZM7 -10L8 -4H10L9 -10Z" />
          </g>`)}
      </svg>
    `;
  }

  private interstate(x: number, y: number, label: string, body: string, crown: string, edge: string, half: number) {
    const inner = half - 5;
    return svg`
      <g transform="translate(${x} ${y})">
        <path fill=${edge} d="M${-half + 5} -26Q${-half / 2} -22 0 -26Q${half / 2} -22 ${half - 5} -26Q${half + 6} -6 ${half - 3} 8Q${half - 12} 22 0 27Q${-half + 12} 22 ${-half + 3} 8Q${-half - 6} -6 ${-half + 5} -26Z" />
        <path fill=${crown} d="M${-inner + 3} -20Q${-inner / 2} -18 0 -21Q${inner / 2} -18 ${inner - 3} -20L${inner} -13H${-inner}Z" />
        <path fill=${body} d="M${-inner} -9H${inner}Q${inner + 1} 0 ${inner - 3} 7Q${inner - 11} 18 0 22Q${-inner + 11} 18 ${-inner + 3} 7Q${-inner - 1} 0 ${-inner} -9Z" />
        <text class="num light" x="0" y="10">${label}</text>
      </g>`;
  }
}

interface Offer {
  pay: string;
  tier: string;
  priority?: string;
  notes: string[];
  trips: string;
  distance: string;
  time: string;
  status: string;
  store: string;
  address: string;
}

@customElement("offer-card")
export class OfferCard extends LitElement {
  @property({ attribute: false }) offer!: Offer;

  static styles = css`
    :host { display: block; }
    .icon { display: block; flex: none; }
    .card { display: flex; flex-direction: column; gap: 19px; padding: 44px 44px 41px; border: 2px solid #4b3a1b; border-radius: 60px; background: #1c1c1e; }
    .priority { display: flex; align-self: flex-start; align-items: center; gap: 11px; padding: 14px 20px 12px; border: 2px solid #8f7a38; border-radius: 26px; background: linear-gradient(100deg, #57492a, #42271f); color: #fbd75b; font-size: 26px; line-height: 30px; font-weight: 700; }
    .notes { display: flex; flex-wrap: wrap; gap: 15px; margin: 0; padding: 0; list-style: none; }
    .note { padding: 13px 21px; border: 2px solid #2e2e30; border-radius: 28px; background: #262627; color: #9a9ca8; font-size: 26px; line-height: 31px; font-weight: 500; }
    .body { display: flex; align-items: flex-start; gap: 44px; }
    .badge { display: flex; flex: none; align-items: center; justify-content: center; box-sizing: border-box; width: 134px; height: 134px; border: 2px solid #70501b; border-radius: 50%; background: #3a2c1b; color: #f59e0b; }
    .details { display: flex; flex: 1; flex-direction: column; gap: 24px; min-width: 0; }
    .payline { display: flex; align-items: center; gap: 26px; line-height: 84px; }
    .pay { margin: 0; color: #ffffff; font-size: 58px; font-weight: 800; letter-spacing: -4px; }
    .tier { padding: 13px 24px; border-radius: 31px; background: #3d2e1b; color: #f59e0b; font-size: 31px; line-height: 36px; font-weight: 600; }
    .stats { display: grid; grid-template-columns: repeat(3, 1fr); gap: 19px; margin: 0; }
    .stat { display: flex; flex-direction: column; align-items: center; gap: 19px; padding: 27px 24px 34px; border: 3px solid #8b5f18; border-radius: 34px; background: linear-gradient(110deg, #4f3c1d, #604617 35%, #5c4318 50%, #46351a 72%, #221e1b 96%); background-clip: padding-box; color: #f59e0b; }
    .value { margin: 0; color: #ffffff; font-size: 30px; line-height: 36px; font-weight: 700; }
    .status { display: flex; align-items: center; gap: 17px; margin: 0; color: #f47521; font-size: 31px; line-height: 44px; font-weight: 600; }
    .pickup { display: flex; align-items: center; gap: 22px; margin-bottom: -4px; color: #9094a0; }
    .shop { margin: 0; font-size: 36px; line-height: 52px; font-weight: 400; }
    .address { margin: 0; font-size: 31px; line-height: 50px; font-weight: 400; }
    .store { color: #b98117; }
    .kind { display: flex; flex: none; align-items: center; justify-content: center; box-sizing: border-box; width: 178px; height: 178px; border: 2px solid #755631; border-radius: 46px; background: #362d24; color: #ffb347; }
    .actions { display: grid; grid-template-columns: 1fr 1fr; gap: 26px; }
    .action { display: flex; align-items: center; justify-content: center; gap: 24px; height: 129px; border: 2px solid #2d2d2f; border-radius: 44px; background: transparent; color: #9ca0ad; font-family: inherit; font-size: 40px; font-weight: 500; cursor: pointer; }
    .accept { border: none; background: linear-gradient(177deg, #f67424, #e85c02); color: #ffffff; font-weight: 600; }
    .s28 { width: 28px; height: 28px; }
    .s42 { width: 42px; height: 42px; }
    .s44 { width: 44px; height: 44px; }
    .s72 { width: 72px; height: 72px; }
    .s120 { width: 120px; height: 120px; }
  `;

  render() {
    const o = this.offer;
    return html`
      <article class="card">
        ${o.priority
          ? html`<div class="priority">${icon("bolt", "s28")}${icon("emojiBolt", "s28")}<span>${o.priority}</span></div>`
          : nothing}
        <ul class="notes">${o.notes.map((n) => html`<li class="note">${n}</li>`)}</ul>
        <div class="body">
          <div class="badge">${icon("bolt", "s72")}</div>
          <div class="details">
            <div class="payline">
              <h2 class="pay">${o.pay}</h2>
              <span class="tier">${o.tier}</span>
            </div>
            <div class="stats">
              <div class="stat">${icon("pin", "s44")}<p class="value">${o.trips}</p></div>
              <div class="stat">${icon("route", "s44")}<p class="value">${o.distance}</p></div>
              <div class="stat">${icon("clock", "s44")}<p class="value">${o.time}</p></div>
            </div>
            <p class="status">${icon("bag", "s44")}<span>${o.status}</span></p>
            <div class="pickup">
              ${icon("store", "s44 store")}
              <div>
                <p class="shop">${o.store}</p>
                <p class="address">${o.address}</p>
              </div>
            </div>
          </div>
          <div class="kind">${icon("bag", "s120")}</div>
        </div>
        <div class="actions">
          <button class="action" type="button">Reject</button>
          <button class="action accept" type="button">Accept ${icon("arrow", "s42")}</button>
        </div>
      </article>
    `;
  }
}

const base = {
  tier: "Medium pay",
  trips: "1 trip",
  distance: "0.8 mi",
  time: "3 min",
  status: "Grocery Order Ready",
  store: "McBurgers Order",
  address: "6910 cliffdale rd, Fayetteville",
};

const OFFERS: Offer[] = [
  { ...base, pay: "$9.58", notes: ["Leave at door", "Ring bell"] },
  { ...base, pay: "$11.08", priority: "Priority Delivery · Higher payout possible", notes: ["Ring bell"] },
];

@customElement("app-root")
export class AppRoot extends LitElement {
  static styles = css`
    :host { display: block; background: #121212; font-family: Roboto, "Liberation Sans", sans-serif; }
    .icon { display: block; flex: none; }
    .shell { display: flex; flex-direction: column; box-sizing: border-box; height: 100vh; padding: 0 36px 0 35px; overflow: hidden; }
    .top { position: relative; flex: none; height: 38vh; }
    .map { height: 100%; }
    .online { position: absolute; top: 34px; left: 50%; display: flex; align-items: center; gap: 24px; box-sizing: border-box; height: 107px; padding: 0 60px; border: 4px solid #2ea27a; border-radius: 54px; background: rgba(52, 211, 153, 0.14); color: #34d399; font-family: inherit; font-size: 31px; font-weight: 600; letter-spacing: 2px; transform: translateX(-50%); cursor: pointer; }
    .dot { width: 21px; height: 21px; border-radius: 50%; background: #34d399; box-shadow: 0 0 28px rgba(52, 211, 153, 0.35); }
    .sheet { position: relative; display: flex; flex: 1; flex-direction: column; min-height: 0; margin-top: -56px; border-radius: 60px 60px 0 0; background: #1c1c1e; }
    .handle { flex: none; align-self: center; width: 100px; height: 10px; margin-top: 24px; border-radius: 5px; background: #7a3f1d; }
    .header { display: flex; flex: none; align-items: center; gap: 25px; padding: 39px 49px 22px; }
    .mark, .tool { display: flex; flex: none; align-items: center; justify-content: center; box-sizing: border-box; width: 99px; height: 100px; padding: 0; border: 2px solid #2f2f31; border-radius: 36px; background: #232325; color: #9ca3af; }
    .tool { cursor: pointer; }
    .mark { border-color: #5a3521; background: #252525; color: #f97424; }
    .white { color: #ffffff; }
    .titles { flex: 1; }
    .title { margin: 0 0 14px; color: #ffffff; font-size: 56px; line-height: 66px; font-weight: 700; letter-spacing: -2px; }
    .subtitle { margin: 0; color: #9ca0ad; font-size: 31px; line-height: 36px; font-weight: 500; }
    .tools { display: flex; gap: 20px; }
    .list { display: flex; flex: 1; flex-direction: column; gap: 59px; min-height: 0; padding: 0 45px; overflow-y: auto; scrollbar-width: none; }
    .offer { flex: none; }
    .s54 { width: 54px; height: 54px; }
  `;

  protected firstUpdated() {
    this.updateComplete.then(() => {
      requestAnimationFrame(() => {
        const list = this.renderRoot.querySelector(".list");
        if (list) list.scrollTop = 28;
      });
    });
  }

  render() {
    return html`
      <main class="shell">
        <section class="top">
          <city-map class="map"></city-map>
          <button class="online" type="button"><span class="dot"></span>ONLINE</button>
        </section>
        <section class="sheet">
          <div class="handle"></div>
          <header class="header">
            <div class="mark">${icon("bolt", "s54")}</div>
            <div class="titles">
              <h1 class="title">Live Offers</h1>
              <p class="subtitle">New opportunities nearby</p>
            </div>
            <div class="tools">
              <button class="tool" type="button" aria-label="Theme">${icon("sun", "s54")}</button>
              <button class="tool white" type="button" aria-label="Filters">${icon("tune", "s54")}</button>
            </div>
          </header>
          <div class="list">
            ${OFFERS.map((o) => html`<offer-card class="offer" .offer=${o}></offer-card>`)}
          </div>
        </section>
      </main>
    `;
  }
}
